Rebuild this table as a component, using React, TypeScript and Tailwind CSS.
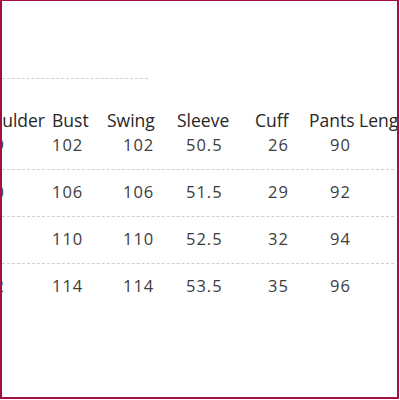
const headers = ["Shoulder", "Bust", "Swing", "Sleeve", "Cuff", "Pants Length"];

const rows = [
  ["39", "102", "102", "50.5", "26", "90"],
  ["40", "106", "106", "51.5", "29", "92"],
  ["41", "110", "110", "52.5", "32", "94"],
  ["42", "114", "114", "53.5", "35", "96"],
];

// column widths and left paddings, read off the chart
const cols = "grid grid-cols-[84px_55px_70px_78px_54px_120px]";
const headPad = ["text-right pr-[9px]", "-ml-[2px]", "-ml-[2px]", "-ml-[2px]", "-ml-[2px]", "-ml-[2px]"];
const cellPad = ["pl-[14px]", "-ml-[2px]", "pl-[14px]", "pl-[7px]", "pl-[11px]", "pl-[19px]"];

const Dashed = ({ w }: { w: string }) => (
  <div className={`${w} h-0 border-t border-dashed border-[#cfcfcf]`} />
);

export default function App() {
  return (
    <div className="w-[400px] h-[400px] bg-white">
      <div className="w-[399px] h-[399px] border-l-2 border-t border-r-2 border-b-2 border-[#a3123f] overflow-hidden font-['Open_Sans',_'Noto_Sans',_sans-serif]">
        <div className="-ml-[32px] pt-[77px]">
          <div className="pl-[32px]">
            <Dashed w="w-[146px]" />
          </div>
          <div className={`${cols} mt-[30px] text-[17.5px] font-medium leading-[22px] text-[#262626] whitespace-nowrap`}>
            {headers.map((h, i) => (
              <div key={h} className={headPad[i]}>
                {h}
              </div>
            ))}
          </div>
          {rows.map((r, ri) => (
            <div key={ri}>
              {ri > 0 && (
                <div className="pl-[32px] mt-[13px]">
                  <Dashed w="w-[392px]" />
                </div>
              )}
              <div
                className={`${cols} ${ri === 0 ? "mt-[3px]" : "mt-[11px]"} text-[16.5px] leading-[22px] tracking-[1px] text-[#3c3c3c] whitespace-nowrap`}
              >
                {r.map((c, i) => (
                  <div key={i} className={cellPad[i]}>
                    {c}
                  </div>
                ))}
              </div>
            </div>
          ))}
        </div>
      </div>
    </div>
  );
}
